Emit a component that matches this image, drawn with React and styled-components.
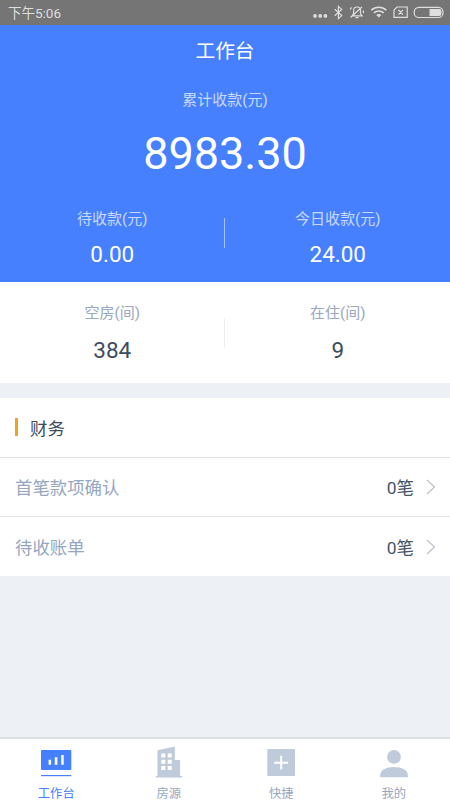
import React from 'react';
import styled, { createGlobalStyle } from 'styled-components';

const GlobalStyle = createGlobalStyle`
  * {
    box-sizing: border-box;
  }
  body {
    margin: 0;
    background: #edf0f5;
    font-family: Roboto, "Noto Sans CJK SC", sans-serif;
  }
`;

const Page = styled.div`
  display: flex;
  flex-direction: column;
  width: 450px;
  height: 800px;
  overflow: hidden;
  background: #edf0f5;
`;

const StatusBar = styled.div`
  display: flex;
  align-items: center;
  justify-content: space-between;
  height: 25px;
  padding: 0 6px 0 8px;
  background: #757575;
  color: #dedede;
  font-size: 13.5px;
  line-height: 25px;
`;

const Time = styled.div`
  padding-top: 1px;
`;

const Hero = styled.div`
  display: flex;
  flex-direction: column;
  align-items: center;
  height: 257px;
  background: #4680ff;
  color: #fff;
`;

const Title = styled.div`
  height: 50px;
  font-size: 19.7px;
  line-height: 54px;
`;

const Label = styled.div`
  font-size: 15px;
  line-height: 22px;
  color: ${(p) => (p.$light ? '#c8d9ff' : '#98a8c0')};
`;

const Total = styled.div`
  display: flex;
  flex-direction: column;
  align-items: center;
  padding-top: 14px;
  height: 133px;
`;

const TotalNumber = styled.div`
  margin-top: 17px;
  font-size: 45px;
  line-height: 51px;
`;

const Stats = styled.div`
  display: flex;
  align-items: flex-start;
  width: 100%;
  height: ${(p) => (p.$light ? 'auto' : '101px')};
  padding-top: ${(p) => (p.$light ? '0' : '20px')};
  background: ${(p) => (p.$light ? 'transparent' : '#fff')};
`;

const Stat = styled.div`
  flex: 1;
  display: flex;
  flex-direction: column;
  align-items: center;
`;

const StatNumber = styled.div`
  margin-top: ${(p) => (p.$light ? '10px' : '12px')};
  font-size: 22.5px;
  line-height: 28px;
  color: ${(p) => (p.$light ? '#fff' : '#3e4c5f')};
`;

const Divider = styled.div`
  width: 1px;
  height: 30px;
  margin: ${(p) => (p.$light ? '10px' : '16px')} 1px 0 -1px;
  background: ${(p) => (p.$light ? '#a5c1ff' : '#eceef1')};
`;

const Card = styled.div`
  margin-top: 15px;
  height: 178px;
  background: #fff;
`;

const Row = styled.div`
  display: flex;
  align-items: center;
  height: ${(p) => (p.$head ? '60px' : '59px')};
  padding: 0 14px 0 15px;
  border-bottom: ${(p) => (p.$last ? '0' : '1px solid #e2e4e8')};
  color: ${(p) => (p.$head ? '#3e4c5f' : '#96a6c1')};
  font-size: 17.4px;
  line-height: 26px;
`;

const RowText = styled.div`
  padding-top: 2px;
`;

const Mark = styled.div`
  width: 3px;
  height: 18px;
  margin-right: 12px;
  margin-bottom: 2px;
  background: #f0a31e;
`;

const Count = styled(RowText)`
  margin-left: auto;
  margin-right: 12px;
  color: #44546a;
`;

const TabBar = styled.div`
  display: flex;
  margin-top: auto;
  height: 63px;
  border-top: 2px solid #dedfe1;
  background: #fff;
`;

const Tab = styled.div`
  flex: 1;
  display: flex;
  flex-direction: column;
  align-items: center;
  padding-top: 7px;
  color: ${(p) => (p.$active ? '#4680ff' : '#96a6c1')};
  font-size: 12.3px;
  line-height: 16px;

  svg {
    flex: none;
    margin-bottom: 8px;
  }
`;

const StatusIcons = () => (
  <svg width="132" height="25" viewBox="312 0 132 25" fill="none" stroke="#dedede" strokeWidth="1.2">
    <g fill="#dedede" stroke="none">
      <circle cx="315" cy="15.9" r="1.9" />
      <circle cx="320.2" cy="15.9" r="1.9" />
      <circle cx="325.4" cy="15.9" r="1.9" />
    </g>
    {/* bluetooth */}
    <path d="M334.7 9.2l7 6.4-3.3 3V6.4l3.3 3-7 6.4" />
    {/* muted bell */}
    <path d="M352.2 15.8l1.4-2.2v-3c0-2.4 1.3-3.6 3.4-3.6s3.5 1.2 3.5 3.6v3l1.6 2.2zM355.5 17.6h3M350.5 17.5L362 7M350.3 9.4l1.2-2M363 10.5l.8 2.5" />
    {/* wifi */}
    <g strokeWidth="1.6">
      <path d="M371.3 10.2c4.2-3.9 10.8-3.9 15 0M373.9 12.8c2.8-2.5 7-2.5 9.8 0" />
      <path d="M376.2 15c1.5-1.2 3.7-1.2 5.2 0l-2.6 2.6z" fill="#dedede" stroke="none" />
    </g>
    {/* no sim */}
    <path d="M397 7h10.2v10.4H394V10zM398.4 10l4.6 4.6M403 10l-4.6 4.6" />
    {/* battery */}
    <rect x="414.2" y="7.3" width="28.8" height="10.2" rx="4.6" />
    <path d="M429.5 9h9.7c1.6 0 2.3 1 2.3 3.4s-.7 3.5-2.3 3.5h-9.7z" fill="#dedede" stroke="none" />
  </svg>
);

const Arrow = () => (
  <svg width="10" height="16" viewBox="0 0 10 16" fill="none" stroke="#bfc4cb" strokeWidth="1.3">
    <path d="M1 1l7.5 7L1 15" />
  </svg>
);

const WorkIcon = () => (
  <svg width="32" height="32" viewBox="0 0 32 32" fill="#4680ff">
    <rect x="1" y="4" width="30.3" height="20" rx="1" />
    <rect x="1" y="29" width="30.3" height="1.2" />
    <path d="M8.6 13.8h2.5v5H8.6zM14.8 11.3h2.6v7.5h-2.6zM21.2 9h2.5v9.8h-2.5z" fill="#fff" />
  </svg>
);

const HouseIcon = () => (
  <svg width="32" height="32" viewBox="0 0 32 32" fill="#bfcada">
    <path d="M4.5 4.3L21.8.6V14h5.3v16h2v1.5H2.8V30h1.7z" />
    <path d="M8.3 7.5h4v4h-4zM14.7 7.5h4v4h-4zM8.3 13.8h4v4h-4zM14.7 13.8h4v4h-4zM8.3 20.1h4v4h-4zM14.7 20.1h4v4h-4z" fill="#fff" />
  </svg>
);

const QuickIcon = () => (
  <svg width="32" height="32" viewBox="0 0 32 32" fill="#bfcada">
    <rect x="2.3" y="3" width="27.7" height="27" rx="1" />
    <path d="M15.2 9.8h2v5.9h6v2h-6v5.9h-2v-5.9h-6v-2h6z" fill="#fff" />
  </svg>
);

const MineIcon = () => (
  <svg width="32" height="32" viewBox="0 0 32 32" fill="#bfcada">
    <circle cx="16" cy="10.9" r="6.9" />
    <path d="M2.2 31.3v-2.6c0-4.5 6.2-7.8 13.8-7.8s13.8 3.3 13.8 7.8v2.6z" />
  </svg>
);

const App = () => (
  <Page>
    <GlobalStyle />
    <StatusBar>
      <Time>下午5:06</Time>
      <StatusIcons />
    </StatusBar>
    <Hero>
      <Title>工作台</Title>
      <Total>
        <Label $light>累计收款(元)</Label>
        <TotalNumber>8983.30</TotalNumber>
      </Total>
      <Stats $light>
        <Stat>
          <Label $light>待收款(元)</Label>
          <StatNumber $light>0.00</StatNumber>
        </Stat>
        <Divider $light />
        <Stat>
          <Label $light>今日收款(元)</Label>
          <StatNumber $light>24.00</StatNumber>
        </Stat>
      </Stats>
    </Hero>
    <Stats>
      <Stat>
        <Label>空房(间)</Label>
        <StatNumber>384</StatNumber>
      </Stat>
      <Divider />
      <Stat>
        <Label>在住(间)</Label>
        <StatNumber>9</StatNumber>
      </Stat>
    </Stats>
    <Card>
      <Row $head>
        <Mark />
        <RowText>财务</RowText>
      </Row>
      <Row>
        <RowText>首笔款项确认</RowText>
        <Count>0笔</Count>
        <Arrow />
      </Row>
      <Row $last>
        <RowText>待收账单</RowText>
        <Count>0笔</Count>
        <Arrow />
      </Row>
    </Card>
    <TabBar>
      <Tab $active>
        <WorkIcon />
        工作台
      </Tab>
      <Tab>
        <HouseIcon />
        房源
      </Tab>
      <Tab>
        <QuickIcon />
        快捷
      </Tab>
      <Tab>
        <MineIcon />
        我的
      </Tab>
    </TabBar>
  </Page>
);

export default App;
